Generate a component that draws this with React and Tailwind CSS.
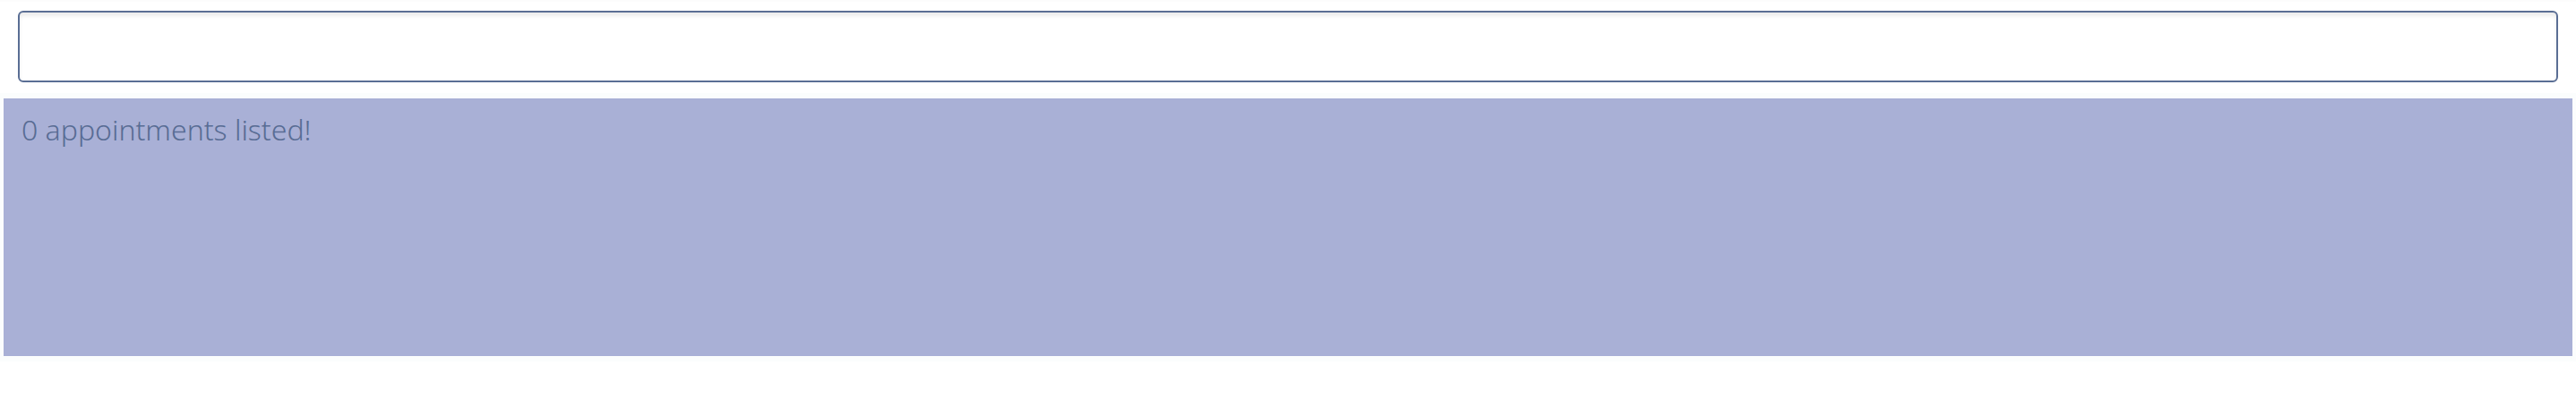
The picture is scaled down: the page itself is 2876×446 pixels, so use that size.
export default function App() {
  return (
    <main className="min-h-screen bg-white font-['Noto_Sans','Open_Sans',sans-serif] text-[#586c94]">
      <div className="border-t-2 border-[#fcfcfc] px-5 pt-2.5 pb-3">
        <input
          type="text"
          aria-label="Search appointments"
          className="block h-20 w-full rounded-md border-2 border-[#5a6e94] bg-white px-4 text-[32px] font-light shadow-[inset_0_4px_4px_rgba(0,0,0,0.08)] outline-none"
        />
      </div>
      <section className="border-x-4 border-y-6 border-[#fbfdfd] bg-[#a9b0d6] bg-clip-padding">
        <p className="min-h-72 px-5 pt-2.5 text-[32px] leading-[50px] font-light">
          0 appointments listed!
        </p>
      </section>
    </main>
  );
}
